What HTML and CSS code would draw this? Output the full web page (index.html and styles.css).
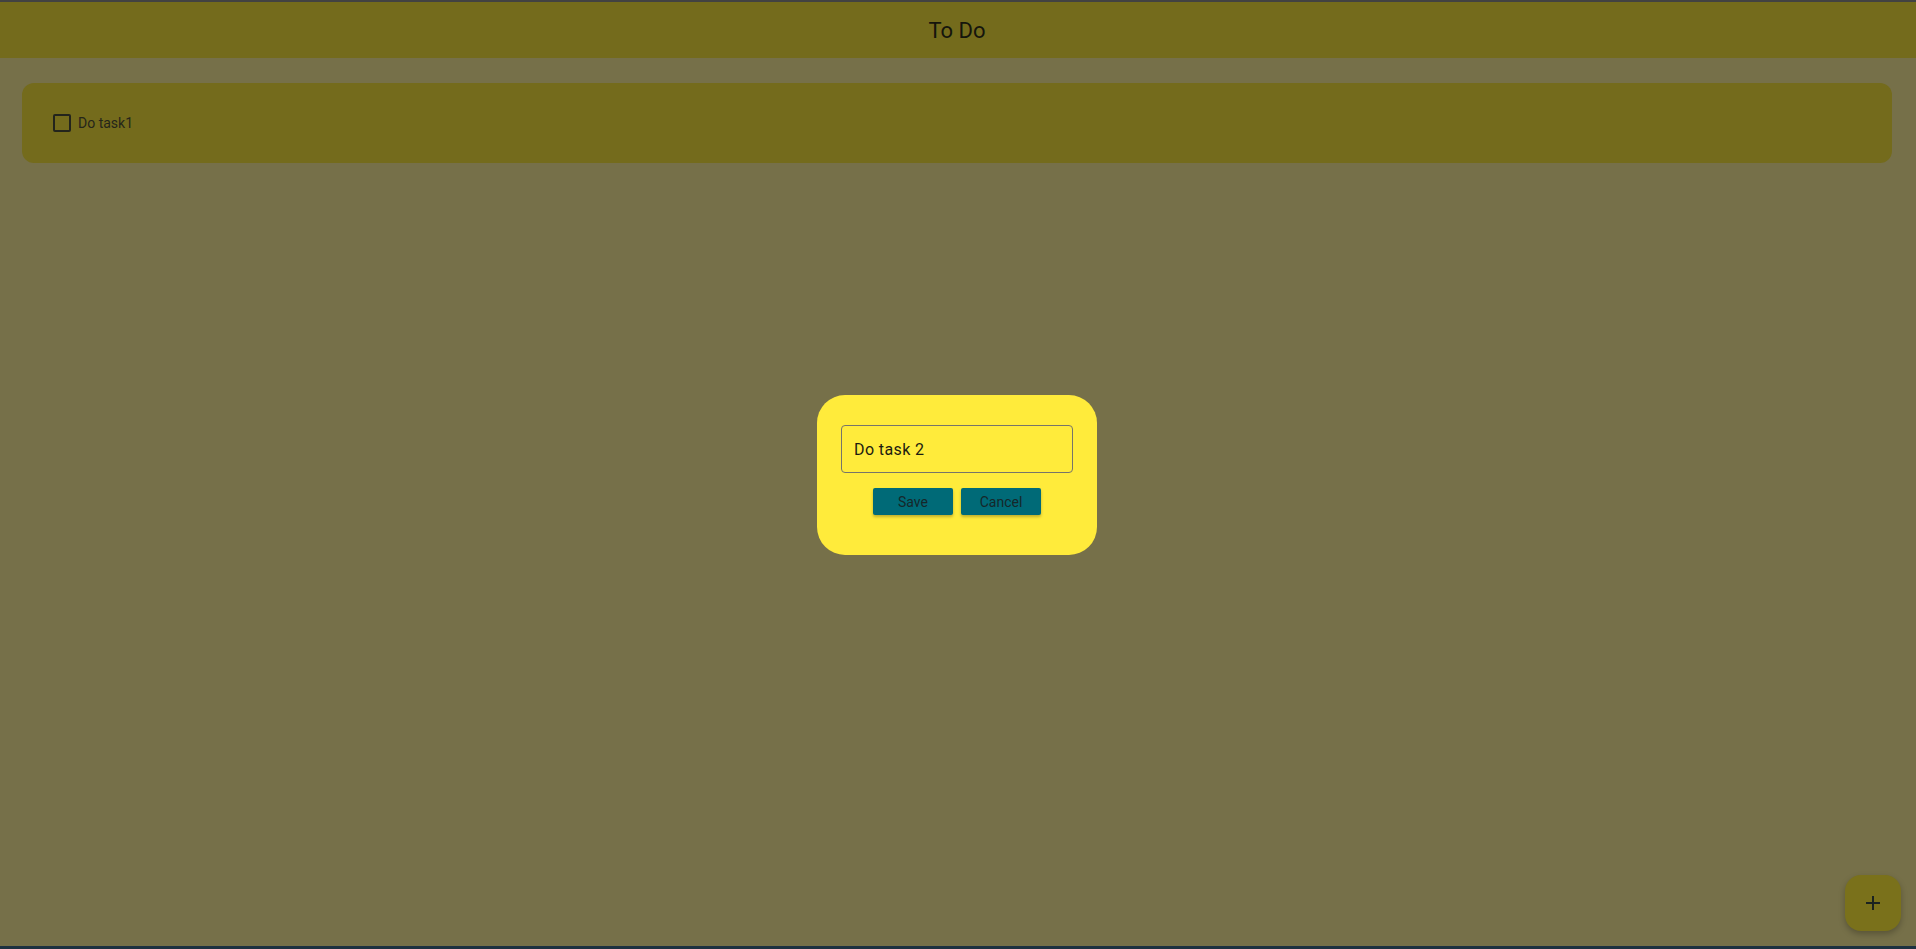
FILE: index.html
```html
<!DOCTYPE html>
<html lang="en">
<head>
<meta charset="utf-8">
<title>To Do</title>
<link rel="stylesheet" href="styles.css">
</head>
<body>
<div class="page">
  <header class="appbar"><h1 class="title">To Do</h1></header>
  <main class="content">
    <div class="task-card">
      <label class="task">
        <span class="checkbox"></span>
        <span class="task-text">Do task1</span>
      </label>
    </div>
  </main>
  <div class="bottom-line"></div>
</div>

<div class="dialog">
  <div class="field">Do task 2</div>
  <div class="actions">
    <button class="btn">Save</button>
    <button class="btn">Cancel</button>
  </div>
</div>

<button class="fab" aria-label="Add">
  <svg width="24" height="24" viewBox="0 0 24 24"><path d="M19 13h-6v6h-2v-6H5v-2h6V5h2v6h6v2z" fill="#1b2320"/></svg>
</button>
</body>
</html>
```
FILE: styles.css
```css
* { box-sizing: border-box; }
html, body { margin: 0; padding: 0; height: 100%; }
body {
  font-family: Roboto, "Liberation Sans", Arial, sans-serif;
  background: #767049;
  overflow: hidden;
}
.page {
  height: 949px;
  display: flex;
  flex-direction: column;
  border-top: 2px solid #424242;
}
.appbar {
  height: 56px;
  background: #746b1c;
  display: flex;
  align-items: center;
  justify-content: center;
}
.title {
  margin: 0 2px 0 0;
  font-weight: 400;
  font-size: 22px;
  color: #15150c;
  letter-spacing: 0;
}
.content {
  flex: 1;
  padding: 25px 24px 0 22px;
}
.task-card {
  height: 80px;
  background: #746b1c;
  border-radius: 12px;
  display: flex;
  align-items: center;
  padding-left: 31px;
}
.task {
  display: flex;
  align-items: center;
  gap: 7px;
}
.checkbox {
  width: 18px;
  height: 18px;
  border: 2px solid #23241c;
  border-radius: 2px;
}
.task-text {
  font-size: 14px;
  color: #25251a;
}
.bottom-line {
  height: 3px;
  background: #1d3140;
}
.dialog {
  position: absolute;
  left: 817px;
  top: 395px;
  width: 280px;
  height: 160px;
  background: #ffeb3b;
  border-radius: 28px;
  padding: 30px 24px 0 24px;
  display: flex;
  flex-direction: column;
  align-items: center;
}
.field {
  width: 232px;
  height: 48px;
  border: 1px solid #76746a;
  border-radius: 4px;
  padding: 0 12px;
  display: flex;
  align-items: center;
  font-size: 16px;
  color: #1d1c10;
  letter-spacing: 0.4px;
}
.actions {
  display: flex;
  gap: 8px;
  margin-top: 15px;
}
.btn {
  width: 80px;
  height: 27px;
  border: none;
  border-radius: 2px;
  background: #006a77;
  color: #16272a;
  font-family: Roboto, "Liberation Sans", Arial, sans-serif;
  font-size: 14px;
  box-shadow: 0 2px 3px rgba(0,0,0,0.25);
  padding: 0;
}
.fab {
  position: absolute;
  left: 1845px;
  top: 875px;
  width: 56px;
  height: 56px;
  border: none;
  border-radius: 16px;
  background: #7a711b;
  box-shadow: 0 3px 6px rgba(0,0,0,0.25);
  display: flex;
  align-items: center;
  justify-content: center;
  padding: 0;
}
```
